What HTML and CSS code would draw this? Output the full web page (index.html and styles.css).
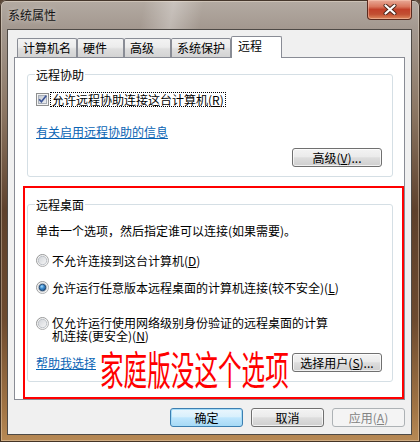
FILE: index.html
```html
<!DOCTYPE html>
<html lang="zh-CN">
<head>
<meta charset="utf-8">
<title>系统属性</title>
<link rel="stylesheet" href="styles.css">
</head>
<body>
<svg class="defs" width="0" height="0" aria-hidden="true">
  <defs>
    <linearGradient id="cbg" x1="0" y1="0" x2="1" y2="1">
      <stop offset="0" stop-color="#c3c9d2"/>
      <stop offset="1" stop-color="#eef0f3"/>
    </linearGradient>
    <linearGradient id="rbg" x1="0" y1="0" x2="1" y2="1">
      <stop offset="0" stop-color="#d0d3d8"/>
      <stop offset="1" stop-color="#f7f7f7"/>
    </linearGradient>
    <linearGradient id="rring" x1="0" y1="0" x2="1" y2="1">
      <stop offset="0" stop-color="#8b8c8d"/>
      <stop offset="1" stop-color="#b9babb"/>
    </linearGradient>
    <radialGradient id="rdot" cx="0.4" cy="0.35" r="0.7">
      <stop offset="0" stop-color="#a9dcfb"/>
      <stop offset="0.45" stop-color="#3c8ccf"/>
      <stop offset="1" stop-color="#164c84"/>
    </radialGradient>
  </defs>
</svg>
<div class="window">
  <div class="titlebar">
    <span class="title">系统属性</span>
    <div class="close">
      <svg width="14" height="11" viewBox="0 0 14 11">
        <path d="M2.5 1.5 L11.5 9.5 M11.5 1.5 L2.5 9.5" stroke="#4a2418" stroke-width="4" stroke-linecap="round"/>
        <path d="M2.5 1.5 L11.5 9.5 M11.5 1.5 L2.5 9.5" stroke="#ffffff" stroke-width="2.2" stroke-linecap="round"/>
      </svg>
    </div>
  </div>
  <div class="client">
    <div class="tabs">
      <div class="tab">计算机名</div>
      <div class="tab">硬件</div>
      <div class="tab">高级</div>
      <div class="tab">系统保护</div>
      <div class="tab active">远程</div>
    </div>
    <div class="panel">
      <div class="group assist">
        <span class="group-title">远程协助</span>
        <div class="check-row">
          <svg class="checkbox" width="13" height="13" viewBox="0 0 13 13">
            <rect x="0.5" y="0.5" width="12" height="12" fill="#f4f4f4" stroke="#8e8f8f"/>
            <rect x="2.5" y="2.5" width="8" height="8" fill="url(#cbg)" stroke="#a9afb8"/>
            <path d="M3.2 6.3 L5.4 8.8 L10.2 2.8" fill="none" stroke="#3e5597" stroke-width="1.7"/>
          </svg>
          <span class="focus-label">允许远程协助连接这台计算机(<u>R</u>)</span>
        </div>
        <div class="link-row"><span class="link">有关启用远程协助的信息</span></div>
        <div class="btn-row">
          <button class="btn wide">高级(<u>V</u>)...</button>
        </div>
      </div>
      <div class="redbox">
        <div class="group desktop">
          <span class="group-title">远程桌面</span>
          <div class="desc">单击一个选项，然后指定谁可以连接(如果需要)。</div>
          <div class="radio-row first">
            <svg class="radio" width="13" height="13" viewBox="0 0 13 13">
              <circle cx="6.5" cy="6.5" r="6" fill="#f4f4f4" stroke="url(#rring)"/>
              <circle cx="6.5" cy="6.5" r="4.2" fill="url(#rbg)" stroke="#b3b8be" stroke-width="0.8"/>
            </svg>
            <span class="radio-label">不允许连接到这台计算机(<u>D</u>)</span>
          </div>
          <div class="radio-row second">
            <svg class="radio" width="13" height="13" viewBox="0 0 13 13">
              <circle cx="6.5" cy="6.5" r="6" fill="#f4f4f4" stroke="url(#rring)"/>
              <circle cx="6.5" cy="6.5" r="4.2" fill="url(#rbg)" stroke="#b3b8be" stroke-width="0.8"/>
              <circle cx="6.5" cy="6.5" r="3.3" fill="url(#rdot)" stroke="#1d3f66" stroke-width="0.8"/>
            </svg>
            <span class="radio-label">允许运行任意版本远程桌面的计算机连接(较不安全)(<u>L</u>)</span>
          </div>
          <div class="radio-row third">
            <svg class="radio" width="13" height="13" viewBox="0 0 13 13">
              <circle cx="6.5" cy="6.5" r="6" fill="#f4f4f4" stroke="url(#rring)"/>
              <circle cx="6.5" cy="6.5" r="4.2" fill="url(#rbg)" stroke="#b3b8be" stroke-width="0.8"/>
            </svg>
            <span class="radio-label wrap">仅允许运行使用网络级别身份验证的远程桌面的计算机连接(更安全)(<u>N</u>)</span>
          </div>
          <div class="bottom-row">
            <span class="link">帮助我选择</span>
            <button class="btn wide">选择用户(<u>S</u>)...</button>
          </div>
        </div>
        <div class="note">家庭版没这个选项</div>
      </div>
    </div>
    <div class="footer">
      <button class="btn default">确定</button>
      <button class="btn">取消</button>
      <button class="btn disabled">应用(<u>A</u>)</button>
    </div>
  </div>
</div>
</body>
</html>
```
FILE: styles.css
```css
* { box-sizing: border-box; }

html, body {
  margin: 0;
  padding: 0;
}

body {
  background: #5a4636;
  font-family: "Noto Sans CJK SC", "Liberation Sans", sans-serif;
  font-size: 12px;
  color: #000;
}

.defs {
  position: absolute;
  width: 0;
  height: 0;
}

.window {
  width: 420px;
  height: 442px;
  display: flex;
  flex-direction: column;
  padding: 0 8px 7px 7px;
  border-radius: 6px 6px 0 0;
  background:
    linear-gradient(100deg, rgba(255,255,255,0) 34%, rgba(255,255,255,0.30) 41%, rgba(255,255,255,0) 48%) top left / 100% 29px no-repeat,
    linear-gradient(180deg, #b4aba3 0px, #a3988f 29px, #8c7764 110px, #5e412c 210px, #6d4a2f 320px, #a27545 410px, #b88a55 442px);
  box-shadow: inset 0 0 0 1px rgba(45, 30, 20, 0.85), inset 0 0 0 2px rgba(255, 240, 220, 0.35);
}

.titlebar {
  height: 29px;
  display: flex;
  justify-content: space-between;
  align-items: flex-start;
  flex: none;
}

.title {
  margin-top: 7px;
  margin-left: 1px;
  line-height: 16px;
  color: #141414;
  text-shadow: 0 0 5px rgba(255, 255, 255, 0.55);
}

.close {
  width: 45px;
  height: 20px;
  margin-top: 0;
  border: 1px solid #5a2a1e;
  border-top: none;
  border-radius: 0 0 4px 4px;
  background: linear-gradient(180deg, #e9aa98 0%, #d9765d 35%, #c2412a 50%, #c24f32 75%, #de8a5e 100%);
  box-shadow: inset 0 0 0 1px rgba(255, 210, 190, 0.45);
  display: flex;
  align-items: center;
  justify-content: center;
}

.client {
  flex: 1;
  display: flex;
  flex-direction: column;
  background: #f0f0f0;
  border: 1px solid #4e4a46;
  padding: 6px 6px 7px 6px;
}

.tabs {
  display: flex;
  align-items: flex-end;
  height: 21px;
  padding-left: 3px;
  position: relative;
  z-index: 1;
  flex: none;
}

.tab {
  height: 19px;
  min-width: 47px;
  padding: 0 5px;
  border: 1px solid #898c95;
  border-bottom: none;
  border-radius: 2px 2px 0 0;
  background: linear-gradient(180deg, #f3f3f3 0%, #ececec 45%, #dedede 55%, #d3d3d3 100%);
  line-height: 18px;
  white-space: nowrap;
}

.tab.active {
  height: 22px;
  min-width: 51px;
  padding: 0 6px;
  margin-bottom: -1px;
  background: #fff;
  line-height: 17px;
}

.panel {
  height: 343px;
  flex: none;
  background: #fff;
  border: 1px solid #898c95;
  display: flex;
  flex-direction: column;
}

.group {
  position: relative;
  border: 1px solid #d5dfe5;
  border-radius: 3px;
  display: flex;
  flex-direction: column;
}

.group-title {
  position: absolute;
  top: -8px;
  left: 7px;
  padding: 0 1px;
  background: #fff;
  line-height: 15px;
}

.assist {
  margin: 16px 11px 0 12px;
  height: 103px;
  padding: 17px 10px 0 8px;
}

.check-row {
  display: flex;
  align-items: center;
  height: 15px;
}

.checkbox {
  flex: none;
}

.focus-label {
  margin-left: 1px;
  padding: 0 1px;
  border: 1px dotted #000;
  line-height: 13px;
  white-space: nowrap;
}

.link-row {
  margin-top: 17px;
  line-height: 15px;
}

.link {
  color: #0a64b4;
  text-decoration: underline;
  line-height: 15px;
  white-space: nowrap;
}

.btn-row {
  margin-top: 9px;
  display: flex;
  justify-content: flex-end;
}

.btn {
  height: 19px;
  width: 73px;
  padding: 0;
  margin: 0;
  border: 1px solid #707070;
  border-radius: 3px;
  background: linear-gradient(180deg, #f3f3f3 0%, #ebebeb 45%, #dddddd 52%, #cfcfcf 100%);
  box-shadow: inset 0 0 0 1px rgba(255, 255, 255, 0.7);
  font-family: inherit;
  font-size: 12px;
  line-height: 16px;
  color: #000;
  text-align: center;
  white-space: nowrap;
}

.btn.wide {
  width: 90px;
}

.btn.default {
  border-color: #3c7fb1;
  box-shadow: inset 0 0 0 1px #a6dcf8;
  background: linear-gradient(180deg, #eaf6fd 0%, #d9f0fc 45%, #bee6fd 52%, #a7d9f5 100%);
}

.btn.disabled {
  border-color: #adb2b5;
  background: #f4f4f4;
  box-shadow: none;
  color: #838383;
}

.redbox {
  position: relative;
  margin: 9px 0 0 8px;
  height: 213px;
  border: 2px solid #ff0000;
  padding: 16px 9px 0 2px;
}

.desktop {
  height: 178px;
  padding: 18px 10px 0 8px;
}

.desc {
  line-height: 15px;
  white-space: nowrap;
}

.radio-row {
  display: flex;
  align-items: center;
}

.radio {
  flex: none;
}

.radio-label {
  margin-left: 3px;
  line-height: 15px;
  white-space: nowrap;
}

.radio-row.first {
  margin-top: 15px;
}

.radio-row.second {
  margin-top: 12px;
}

.radio-row.third {
  margin-top: 21px;
  align-items: flex-start;
}

.radio-row.third .radio {
  margin-top: 1px;
}

.radio-label.wrap {
  white-space: normal;
  width: 282px;
  line-height: 13px;
}

.bottom-row {
  margin-top: 11px;
  display: flex;
  justify-content: space-between;
  align-items: center;
}

.note {
  position: absolute;
  left: 75px;
  top: 160px;
  font-size: 40px;
  line-height: 40px;
  color: #ff0000;
  white-space: nowrap;
  transform: scaleX(0.59);
  transform-origin: 0 0;
}

.footer {
  margin-top: 8px;
  display: flex;
  justify-content: flex-end;
  gap: 8px;
  flex: none;
}
```
